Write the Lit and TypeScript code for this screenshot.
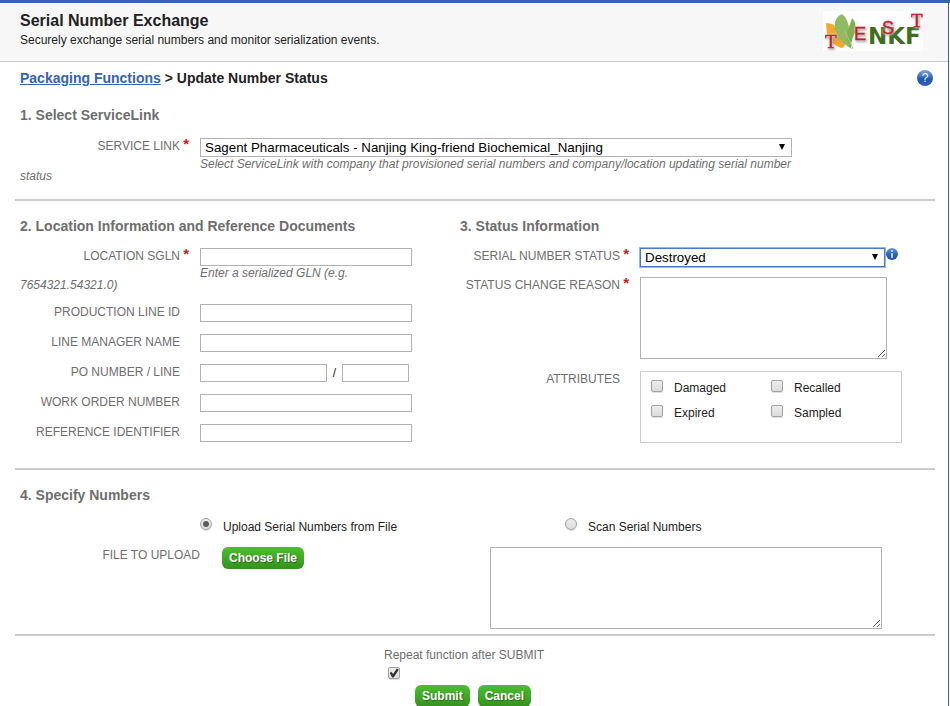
import { LitElement, html, css, svg } from "lit";
import { customElement, state } from "lit/decorators.js";

const logo = svg`
  <svg class="logo" viewBox="0 0 100 40" role="img" aria-label="NKF">
    <rect width="100" height="40" fill="#fff"></rect>
    <path d="M3 12C8 12 12 14 15 18L22 34C21 36 20 37 18 37C12 35 6 30 4 24Z" fill="#f4a62f"></path>
    <path d="M19 3C14 5 11 10 12 17C14 25 19 33 29 38C25 32 24 25 26 19C26 12 23 6 19 3Z" fill="#8fbb62"></path>
    <path d="M29 7C33 11 34 18 31 24C29 28 28 32 28 37C24 31 23 25 25 19C26 14 28 12 29 7Z" fill="#7fb04f"></path>
    <path d="M22 20L30 38" fill="none" stroke="#a9cb7e"></path>
    <text class="nkf" x="45" y="33">NKF</text>
    <g class="red">
      <text x="2" y="37">T</text>
      <text class="sans" x="31" y="29">E</text>
      <text class="sans" x="59" y="23">S</text>
      <text x="88" y="16">T</text>
    </g>
  </svg>`;

const helpIcon = svg`
  <svg class="glyph" viewBox="0 0 16 16" aria-hidden="true">
    <defs>
      <linearGradient id="h" x1="0" y1="0" x2="0" y2="1">
        <stop offset="0" stop-color="#7ea6e0"></stop>
        <stop offset="0.5" stop-color="#2f66bd"></stop>
        <stop offset="0.55" stop-color="#1f56b0"></stop>
        <stop offset="1" stop-color="#2c62ba"></stop>
      </linearGradient>
    </defs>
    <circle cx="8" cy="8" r="8" fill="url(#h)"></circle>
    <text class="mark" x="8" y="12">?</text>
  </svg>`;

const infoIcon = svg`
  <svg class="glyph" viewBox="0 0 12 12" aria-hidden="true">
    <defs>
      <linearGradient id="i" x1="0" y1="0" x2="0" y2="1">
        <stop offset="0" stop-color="#6d98d8"></stop>
        <stop offset="0.5" stop-color="#2d66bf"></stop>
        <stop offset="1" stop-color="#1d50a8"></stop>
      </linearGradient>
    </defs>
    <circle cx="6" cy="6" r="6" fill="url(#i)"></circle>
    <rect x="5" y="2" width="2" height="2" fill="#b9cff0"></rect>
    <path d="M5 5H7V10H5Z" fill="#b9cff0"></path>
  </svg>`;

@customElement("app-root")
export class AppRoot extends LitElement {
  @state() private mode = "file";

  static styles = css`
    :host {
      display: block;
      min-height: 100vh;
      box-sizing: border-box;
      border-top: 3px solid #3464ad;
      padding-right: 1px;
      font: 12px/16px "Liberation Sans", Arial, sans-serif;
      color: #222;
      background: #fff;
      overflow: hidden;
    }
    * { box-sizing: border-box; }
    h1, h2, p { margin: 0; }
    .page {
      border-right: 1px solid #3464ad;
      min-height: calc(100vh - 3px);
    }
    header {
      display: flex;
      justify-content: space-between;
      align-items: flex-start;
      height: 59px;
      padding: 8px 25px 0 20px;
      background: #f7f7f7;
      border-bottom: 1px solid #ccc;
    }
    h1 { font-size: 16px; line-height: 20px; margin-bottom: 1px; }
    .logo { width: 100px; height: 40px; }
    .nkf {
      font: bold 23px "DejaVu Sans", sans-serif;
      fill: #3f6f1c;
    }
    .red {
      font: 19px "Liberation Serif", serif;
      fill: #c4202c;
      stroke: #c4202c;
      stroke-width: 0.4px;
      filter: drop-shadow(0 0 1px #fff) drop-shadow(1px 1px 1px #888);
    }
    .sans { font: 18px "Liberation Sans", sans-serif; }
    main { padding: 0 13px 0 15px; }
    .crumbs {
      display: flex;
      justify-content: space-between;
      padding: 8px 2px 0 5px;
      font-size: 14px;
      font-weight: bold;
    }
    .crumbs a { color: #3464ad; }
    .icon {
      display: block;
      flex: none;
      padding: 0;
      border: 0;
      background: none;
    }
    .help { width: 16px; height: 16px; }
    .info { width: 12px; height: 12px; }
    .glyph { display: block; width: 100%; height: 100%; }
    .mark {
      font: 12px "Liberation Sans", sans-serif;
      fill: #fff;
      text-anchor: middle;
    }
    section { padding: 0 5px; border-bottom: 2px solid #ccc; }
    h2 { font-size: 14px; line-height: 16px; color: #6e6e6e; }
    .link { padding-top: 21px; padding-bottom: 17px; }
    .link h2 { margin-bottom: 15px; }
    .link .hint { max-width: 780px; }
    .pair {
      display: grid;
      grid-template-columns: 440px minmax(0, 1fr);
      padding-top: 17px;
      padding-bottom: 13px;
    }
    .pair h2 { margin-bottom: 14px; }
    .column { padding-right: 20px; }
    .row { display: flex; align-items: flex-start; margin-bottom: 12px; }
    .row.noted { margin-bottom: 0; }
    .label {
      flex: none;
      width: 180px;
      padding-right: 20px;
      text-align: right;
      color: #6e6e6e;
      position: relative;
    }
    .required::after {
      content: "*";
      position: absolute;
      right: 11px;
      top: -2px;
      font-size: 15px;
      font-weight: bold;
      color: #d8141c;
    }
    .hint {
      text-indent: 180px;
      font-style: italic;
      line-height: 12px;
      padding-top: 1px;
      margin-bottom: 13px;
      color: #6e6e6e;
      max-width: 420px;
    }
    .link .hint { margin-bottom: 0; }
    .text, textarea {
      display: block;
      margin: 0;
      padding: 1px 3px;
      border: 1px solid #b3b3b3;
      border-radius: 0;
      background: #fff;
      font-family: inherit;
    }
    .text { width: 212px; height: 18px; }
    .po { width: 127px; }
    .line { width: 67px; }
    .slash { width: 15px; text-align: center; line-height: 18px; }
    textarea { width: 247px; height: 82px; outline: none; }
    select {
      display: block;
      appearance: none;
      margin: 0;
      padding: 0 24px 0 4px;
      height: 19px;
      border: 1px solid #b3b3b3;
      border-radius: 0;
      color: #000;
      font-family: inherit;
      background: #fff url("data:image/svg+xml,%3Csvg xmlns='http://www.w3.org/2000/svg' width='6' height='6'%3E%3Cpath d='M0 0H6L3 6Z'/%3E%3C/svg%3E") no-repeat right 6px top 5px;
    }
    .wide { flex: 0 1 592px; min-width: 0; }
    .status {
      width: 245px;
      border-color: #4a78c4;
      outline: 1px solid #94b8ec;
      outline-offset: 0;
    }
    .status-row { margin-bottom: 10px; }
    .status-row .info { margin-left: 1px; }
    .attributes {
      display: grid;
      grid-template-columns: 120px 120px;
      grid-auto-rows: 16px;
      row-gap: 9px;
      margin: 0;
      width: 262px;
      height: 72px;
      padding: 8px 10px;
      border: 1px solid #ccc;
    }
    .choice { display: flex; align-items: flex-start; gap: 11px; }
    .attributes .choice span { line-height: 16px; }
    .choice span { line-height: 18px; }
    input[type="checkbox"], input[type="radio"] {
      appearance: none;
      flex: none;
      display: block;
      width: 12px;
      height: 12px;
      margin: 0;
      border: 1px solid #a3a3a3;
      border-radius: 2px;
      background: linear-gradient(#ededed, #dcdcdc);
      box-shadow: 0 1px 1px #ddd;
    }
    input[type="radio"] { border-radius: 50%; }
    input:checked::before { content: ""; display: block; }
    input[type="radio"]:checked::before {
      width: 6px;
      height: 6px;
      margin: 2px;
      border-radius: 50%;
      background: #5c5c5c;
    }
    input[type="checkbox"]:checked::before {
      width: 10px;
      height: 10px;
      background: #333;
      clip-path: polygon(8% 50%, 24% 38%, 40% 60%, 78% 6%, 98% 18%, 46% 94%, 32% 94%);
    }
    .numbers { padding-top: 17px; padding-bottom: 5px; }
    .numbers h2 { margin-bottom: 15px; }
    .sources { display: grid; grid-template-columns: 470px minmax(0, 1fr); row-gap: 11px; }
    .by-file { margin-left: 180px; }
    .by-scan { margin-left: 75px; }
    .upload { display: flex; align-items: flex-start; gap: 2px; }
    .upload .label { width: 200px; }
    .scanned { width: 392px; }
    .green {
      height: 22px;
      padding: 0 7px;
      border: 0;
      border-radius: 6px;
      background: linear-gradient(#4bc02f, #36901f);
      color: #fff;
      font: bold 12px/22px "Liberation Sans", Arial, sans-serif;
      text-shadow: 1px 1px 1px #2a6a1a;
    }
    footer { display: grid; justify-content: center; padding-top: 11px; }
    .repeat { width: 182px; color: #6e6e6e; }
    .repeat input { margin: 4px 0 0 4px; }
    .actions { display: flex; gap: 8px; margin: 6px 0 0 31px; }
  `;

  private field(id: string, label: string) {
    return html`<div class="row">
      <label class="label" for=${id}>${label}</label>
      <input class="text" id=${id} type="text" />
    </div>`;
  }

  private attribute(name: string) {
    return html`<label class="choice"><input type="checkbox" /><span>${name}</span></label>`;
  }

  private source(value: string, cls: string, name: string) {
    return html`<label class="choice ${cls}">
      <input type="radio" name="source" .checked=${this.mode === value}
        @change=${() => (this.mode = value)} /><span>${name}</span>
    </label>`;
  }

  render() {
    return html`
      <div class="page">
        <header>
          <div>
            <h1>Serial Number Exchange</h1>
            <p>Securely exchange serial numbers and monitor serialization events.</p>
          </div>
          ${logo}
        </header>
        <main>
          <nav class="crumbs">
            <div><a href="#">Packaging Functions</a> &gt; Update Number Status</div>
            <button class="icon help" type="button" aria-label="Help">${helpIcon}</button>
          </nav>

          <section class="link">
            <h2>1. Select ServiceLink</h2>
            <div class="row noted">
              <label class="label required" for="link">SERVICE LINK</label>
              <select class="wide" id="link">
                <option>Sagent Pharmaceuticals - Nanjing King-friend Biochemical_Nanjing</option>
              </select>
            </div>
            <p class="hint">Select ServiceLink with company that provisioned serial numbers and company/location updating serial number status</p>
          </section>

          <section class="pair">
            <div class="column">
              <h2>2. Location Information and Reference Documents</h2>
              <div class="row noted">
                <label class="label required" for="sgln">LOCATION SGLN</label>
                <input class="text" id="sgln" type="text" />
              </div>
              <p class="hint">Enter a serialized GLN (e.g. 7654321.54321.0)</p>
              ${this.field("line-id", "PRODUCTION LINE ID")}
              ${this.field("manager", "LINE MANAGER NAME")}
              <div class="row">
                <label class="label" for="po">PO NUMBER / LINE</label>
                <input class="text po" id="po" type="text" />
                <span class="slash">/</span>
                <input class="text line" type="text" aria-label="PO line" />
              </div>
              ${this.field("order", "WORK ORDER NUMBER")}
              ${this.field("reference", "REFERENCE IDENTIFIER")}
            </div>
            <div>
              <h2>3. Status Information</h2>
              <div class="row status-row">
                <label class="label required" for="status">SERIAL NUMBER STATUS</label>
                <select class="status" id="status"><option>Destroyed</option></select>
                <button class="icon info" type="button" aria-label="Status details">${infoIcon}</button>
              </div>
              <div class="row">
                <label class="label required" for="reason">STATUS CHANGE REASON</label>
                <textarea id="reason"></textarea>
              </div>
              <div class="row">
                <span class="label" id="attributes">ATTRIBUTES</span>
                <div class="attributes" role="group" aria-labelledby="attributes">
                  ${["Damaged", "Recalled", "Expired", "Sampled"].map((n) => this.attribute(n))}
                </div>
              </div>
            </div>
          </section>

          <section class="numbers">
            <h2>4. Specify Numbers</h2>
            <div class="sources">
              ${this.source("file", "by-file", "Upload Serial Numbers from File")}
              ${this.source("scan", "by-scan", "Scan Serial Numbers")}
              <div class="upload">
                <span class="label">FILE TO UPLOAD</span>
                <button class="green" type="button">Choose File</button>
              </div>
              <textarea class="scanned" aria-label="Scanned serial numbers"></textarea>
            </div>
          </section>

          <footer>
            <label class="repeat">Repeat function after SUBMIT
              <input type="checkbox" checked />
            </label>
            <div class="actions">
              <button class="green" type="submit">Submit</button>
              <button class="green" type="button">Cancel</button>
            </div>
          </footer>
        </main>
      </div>
    `;
  }
}
